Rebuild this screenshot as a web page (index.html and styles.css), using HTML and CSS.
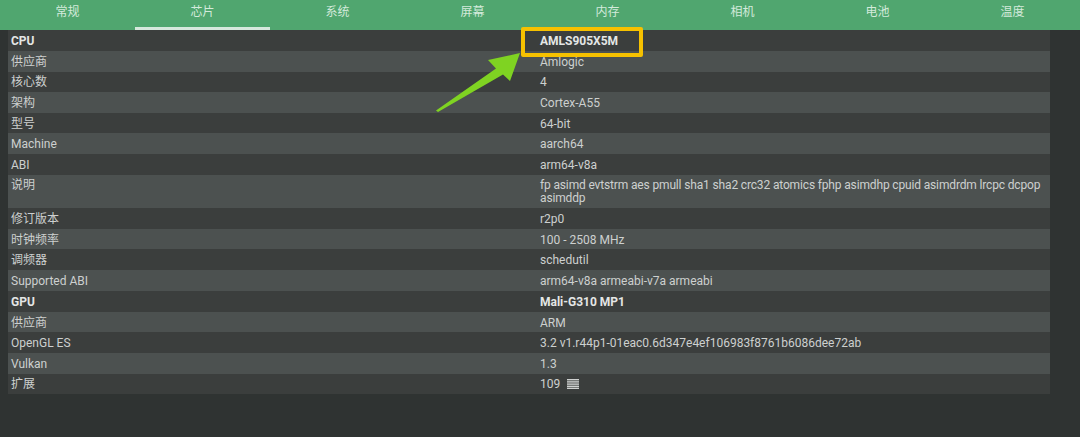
FILE: index.html
```html
<!DOCTYPE html>
<html lang="zh-CN">
<head>
    <meta charset="UTF-8">
    <meta name="viewport" content="width=device-width, initial-scale=1.0">
    <title>芯片信息</title>
    <link rel="stylesheet" href="styles.css">
</head>
<body>
    <div class="tabs">
        <div class="tab">常规</div>
        <div class="tab active">芯片</div>
        <div class="tab">系统</div>
        <div class="tab">屏幕</div>
        <div class="tab">内存</div>
        <div class="tab">相机</div>
        <div class="tab">电池</div>
        <div class="tab">温度</div>
    </div>

    <div class="content">
        <div class="info-table">
            <div class="row head"><div class="label">CPU</div><div class="value">AMLS905X5M</div></div>
            <div class="row"><div class="label">供应商</div><div class="value">Amlogic</div></div>
            <div class="row"><div class="label">核心数</div><div class="value">4</div></div>
            <div class="row"><div class="label">架构</div><div class="value">Cortex-A55</div></div>
            <div class="row"><div class="label">型号</div><div class="value">64-bit</div></div>
            <div class="row"><div class="label">Machine</div><div class="value">aarch64</div></div>
            <div class="row"><div class="label">ABI</div><div class="value">arm64-v8a</div></div>
            <div class="row"><div class="label">说明</div><div class="value features">fp asimd evtstrm aes pmull sha1 sha2 crc32 atomics fphp asimdhp cpuid asimdrdm lrcpc dcpop asimddp</div></div>
            <div class="row"><div class="label">修订版本</div><div class="value">r2p0</div></div>
            <div class="row"><div class="label">时钟频率</div><div class="value">100 - 2508 MHz</div></div>
            <div class="row"><div class="label">调频器</div><div class="value">schedutil</div></div>
            <div class="row"><div class="label">Supported ABI</div><div class="value">arm64-v8a armeabi-v7a armeabi</div></div>
            <div class="row head"><div class="label">GPU</div><div class="value">Mali-G310 MP1</div></div>
            <div class="row"><div class="label">供应商</div><div class="value">ARM</div></div>
            <div class="row"><div class="label">OpenGL ES</div><div class="value">3.2 v1.r44p1-01eac0.6d347e4ef106983f8761b6086dee72ab</div></div>
            <div class="row"><div class="label">Vulkan</div><div class="value">1.3</div></div>
            <div class="row">
                <div class="label">扩展</div>
                <div class="value">109
                    <svg class="list-icon" width="12" height="10" viewBox="0 0 12 10">
                        <rect x="0" y="0" width="12" height="1.4" fill="#cfd1d0"/>
                        <rect x="0" y="2.2" width="12" height="1.4" fill="#cfd1d0"/>
                        <rect x="0" y="4.4" width="12" height="1.4" fill="#cfd1d0"/>
                        <rect x="0" y="6.6" width="12" height="1.4" fill="#cfd1d0"/>
                        <rect x="0" y="8.6" width="12" height="1.4" fill="#cfd1d0"/>
                    </svg>
                </div>
            </div>
        </div>
    </div>

    <!-- annotation over the screenshot -->
    <div class="highlight"></div>
    <svg class="arrow" width="1080" height="437" viewBox="0 0 1080 437">
        <polygon points="436,110.5 496,68.5 488,60 520,53 510,81 503,74.5 438,112" fill="#7fd322"/>
    </svg>
</body>
</html>
```

FILE: styles.css
```css
body {
    margin: 0;
    padding: 0;
    width: 1080px;
    height: 437px;
    overflow: hidden;
    background-color: #2f3332;
    font-family: Roboto, "Noto Sans CJK SC", sans-serif;
    font-size: 12px;
    color: #cdd0cf;
}
.tabs {
    display: flex;
    height: 30px;
    background-color: #50a66f;
}
.tab {
    flex: 1;
    text-align: center;
    line-height: 25px;
    color: #d3eadb;
    font-size: 12px;
    border-bottom: 3px solid transparent;
    box-sizing: border-box;
}
.tab.active {
    border-bottom-color: #d6e8dc;
}
.content {
    padding: 0 30px 0 8px;
}
.info-table {
    display: flex;
    flex-direction: column;
}
.row {
    display: grid;
    grid-template-columns: 529px 1fr;
    background-color: #3b3e3d;
}
.row:nth-child(even) {
    background-color: #4c5150;
}
.label,
.value {
    padding: 4.8px 3px 2.8px;
    line-height: 13px;
}
.value.features {
    padding-right: 0;
    letter-spacing: -0.15px;
}
.row.head {
    font-weight: bold;
    color: #e4e6e5;
    padding-top: 0.5px;
}
.list-icon {
    margin-left: 4px;
    vertical-align: -1px;
}
.highlight {
    position: absolute;
    left: 521px;
    top: 27px;
    width: 114px;
    height: 22px;
    border: 4px solid #f6c100;
    border-radius: 2px;
}
.arrow {
    position: absolute;
    left: 0;
    top: 0;
    pointer-events: none;
}
```
